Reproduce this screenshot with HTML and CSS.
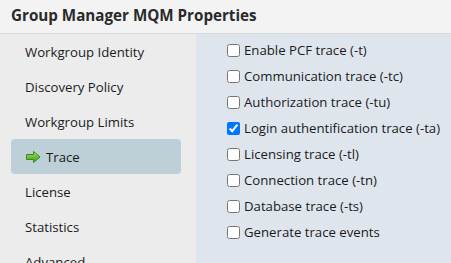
FILE: index.html
```html
<!DOCTYPE html>
<html lang="en">
<head>
  <meta charset="UTF-8">
  <title>Group Manager MQM Properties</title>
  <link rel="stylesheet" href="styles.css">
</head>
<body>
  <div class="dialog">
    <div class="title">Group Manager MQM Properties</div>
    <div class="content">
      <div class="sidebar">
        <div class="nav-item">Workgroup Identity</div>
        <div class="nav-item">Discovery Policy</div>
        <div class="nav-item">Workgroup Limits</div>
        <div class="nav-item selected">
          <svg class="arrow" width="15" height="12" viewBox="0 0 15 12">
            <defs>
              <linearGradient id="g" x1="0" y1="0" x2="0" y2="1">
                <stop offset="0" stop-color="#9be05a"/>
                <stop offset="1" stop-color="#3f9e1c"/>
              </linearGradient>
            </defs>
            <path d="M0.5 3.5 H7.5 V0.5 L14 6 L7.5 11.5 V8.5 H0.5 Z" fill="url(#g)" stroke="#3c8a1e" stroke-width="1" stroke-linejoin="round"/>
          </svg>
          Trace
        </div>
        <div class="nav-item">License</div>
        <div class="nav-item">Statistics</div>
        <div class="nav-item">Advanced</div>
      </div>
      <div class="panel">
        <label class="option"><input type="checkbox"> Enable PCF trace (-t)</label>
        <label class="option"><input type="checkbox"> Communication trace (-tc)</label>
        <label class="option"><input type="checkbox"> Authorization trace (-tu)</label>
        <label class="option"><input type="checkbox" checked> Login authentification trace (-ta)</label>
        <label class="option"><input type="checkbox"> Licensing trace (-tl)</label>
        <label class="option"><input type="checkbox"> Connection trace (-tn)</label>
        <label class="option"><input type="checkbox"> Database trace (-ts)</label>
        <label class="option"><input type="checkbox"> Generate trace events</label>
      </div>
    </div>
  </div>
</body>
</html>
```

FILE: styles.css
```css
html, body {
  margin: 0;
  height: 100%;
  overflow: hidden;
}
body {
  font-family: "Open Sans", "Noto Sans", sans-serif;
  font-size: 13.2px;
  color: #1b1b1b;
  background-color: #dfe5ed;
}
.dialog {
  display: flex;
  flex-direction: column;
  height: 100%;
}
.title {
  flex-shrink: 0;
  height: 33px;
  line-height: 31px;
  padding-left: 11px;
  font-size: 15.2px;
  font-weight: 700;
  color: #2a2a2a;
  background-color: #f3f3f3;
  border-bottom: 1px solid #d9d9d9;
}
.content {
  display: flex;
  flex: 1;
  min-height: 0;
}
.sidebar {
  width: 196px;
  background-color: #ececec;
  padding: 0 15px 0 11px;
  box-sizing: border-box;
  overflow: hidden;
}
.nav-item {
  flex-shrink: 0;
  height: 35px;
  display: flex;
  align-items: center;
  padding-left: 14px;
  white-space: nowrap;
}
.nav-item.selected {
  background-color: #bdcfd7;
  border-radius: 4px;
  padding-left: 15px;
}
.arrow {
  margin-right: 5px;
}
.panel {
  flex: 1;
  padding: 3px 0 0 31px;
}
.option {
  display: flex;
  align-items: center;
  height: 26px;
  white-space: nowrap;
}
.option input {
  width: 13px;
  height: 13px;
  margin: 0 4px 0 0;
}
```
